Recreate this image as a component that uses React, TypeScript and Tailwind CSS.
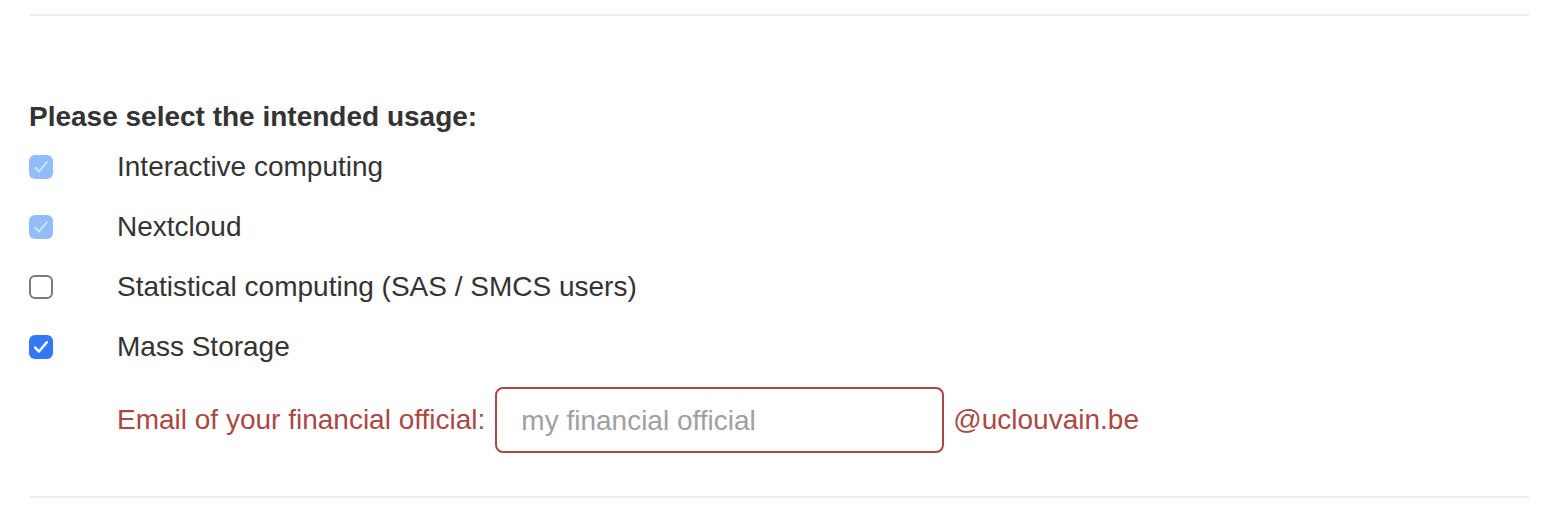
import React from 'react';

type Usage = { label: string; state: 'disabled' | 'off' | 'on' };

const usages: Usage[] = [
  { label: 'Interactive computing', state: 'disabled' },
  { label: 'Nextcloud', state: 'disabled' },
  { label: 'Statistical computing (SAS / SMCS users)', state: 'off' },
  { label: 'Mass Storage', state: 'on' },
];

const Check = ({ state }: { state: Usage['state'] }) => {
  if (state === 'off') {
    return <span className="block h-[24px] w-[24px] rounded-[6px] border-[2px] border-[#7b7b7b] bg-white" />;
  }
  const bg = state === 'on' ? 'bg-[#3478f6]' : 'bg-[#92bdf9]';
  const stroke = state === 'on' ? '#ffffff' : '#d3e4fc';
  return (
    <span className={`flex h-[24px] w-[24px] items-center justify-center rounded-[6px] ${bg}`}>
      <svg width="24" height="24" viewBox="0 0 24 24" fill="none">
        <path d="M6.2 12.6 L10 16.6 L17.8 7.2" stroke={stroke} strokeWidth={state === 'on' ? 2.4 : 1.8} strokeLinecap="round" strokeLinejoin="round" />
      </svg>
    </span>
  );
};

const App: React.FC = () => {
  return (
    <main className="min-h-[518px] bg-white px-[29px] pt-[14px] text-[28px] leading-[40px] text-[#333333]" style={{ fontFamily: '"Liberation Sans", Arial, sans-serif' }}>
      <hr className="mr-[-8px] border-0 border-t-[2px] border-[#eeeeee]" />

      <div className="mt-[81px]">
        <h3 className="font-bold">Please select the intended usage:</h3>

        <div className="mt-[10px] flex flex-col gap-[20px]">
          {usages.map((u) => (
            <label key={u.label} className="flex items-center">
              <Check state={u.state} />
              <span className="ml-[64px]">{u.label}</span>
            </label>
          ))}
        </div>

        {/* financial official */}
        <div className="mt-[20px] flex items-center pl-[88px] text-[#ac4744]">
          <span>Email of your financial official:</span>
          <div className="ml-[10px] flex h-[66px] w-[449px] items-center rounded-[8px] border-[2px] border-[#ac4744] px-[24px]">
            <span className="pt-[2px] text-[#a0a0a0]">my financial official</span>
          </div>
          <span className="ml-[9px]">@uclouvain.be</span>
        </div>
      </div>

      <hr className="mr-[-8px] mt-[43px] border-0 border-t-[2px] border-[#eeeeee]" />
    </main>
  );
};

export default App;
